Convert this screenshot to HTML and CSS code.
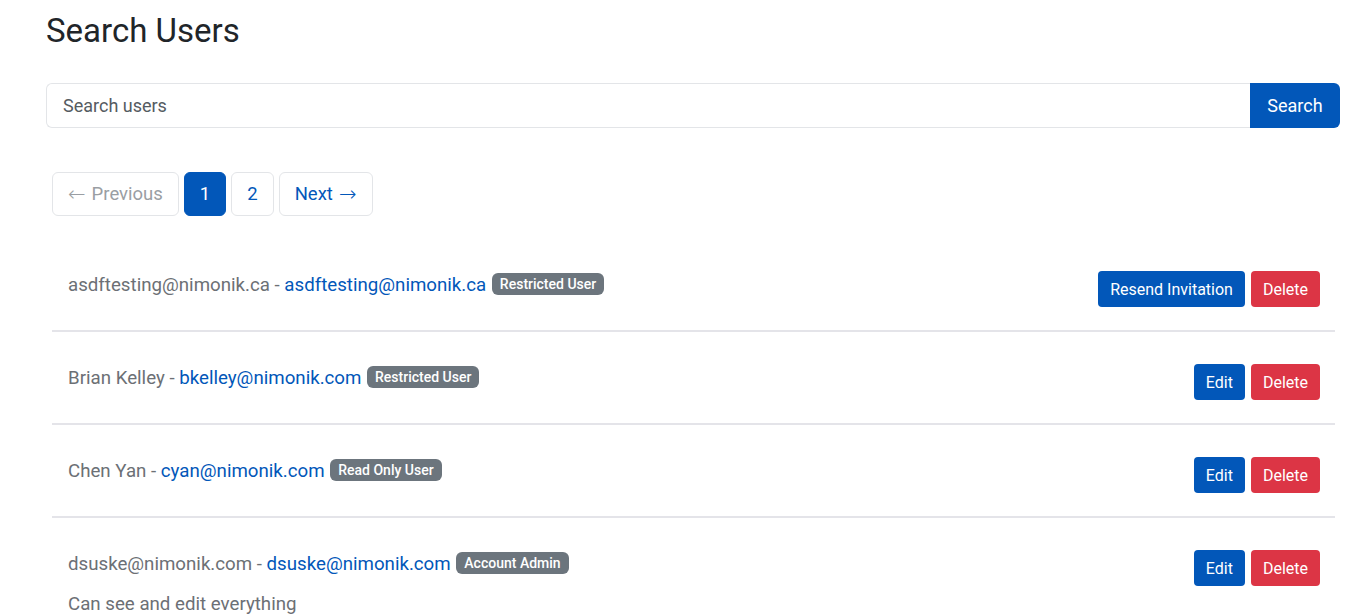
FILE: index.html
```html
<!DOCTYPE html>
<html lang="en">
<head>
  <meta charset="UTF-8" />
  <title>Search Users</title>
  <link rel="stylesheet" href="styles.css">
</head>
<body>
  <div class="page">
    <h1 class="page-title">Search Users</h1>

    <form class="search-bar" onsubmit="return false">
      <input class="search-input" type="text" placeholder="Search users" />
      <button class="search-btn" type="submit">Search</button>
    </form>

    <div class="pagination">
      <span class="page-link disabled"><span class="arrow">&larr;</span> Previous</span>
      <span class="page-link active">1</span>
      <a class="page-link" href="#">2</a>
      <a class="page-link" href="#">Next <span class="arrow">&rarr;</span></a>
    </div>

    <div class="user-list">
      <div class="user-row">
        <div class="user-info">
          <div class="user-line">asdftesting@nimonik.ca - <a href="#">asdftesting@nimonik.ca</a> <span class="badge">Restricted User</span></div>
        </div>
        <div class="user-actions">
          <button class="btn btn-primary">Resend Invitation</button>
          <button class="btn btn-danger">Delete</button>
        </div>
      </div>
      <div class="user-row">
        <div class="user-info">
          <div class="user-line">Brian Kelley - <a href="#">bkelley@nimonik.com</a> <span class="badge">Restricted User</span></div>
        </div>
        <div class="user-actions">
          <button class="btn btn-primary">Edit</button>
          <button class="btn btn-danger">Delete</button>
        </div>
      </div>
      <div class="user-row">
        <div class="user-info">
          <div class="user-line">Chen Yan - <a href="#">cyan@nimonik.com</a> <span class="badge">Read Only User</span></div>
        </div>
        <div class="user-actions">
          <button class="btn btn-primary">Edit</button>
          <button class="btn btn-danger">Delete</button>
        </div>
      </div>
      <div class="user-row">
        <div class="user-info">
          <div class="user-line">dsuske@nimonik.com - <a href="#">dsuske@nimonik.com</a> <span class="badge">Account Admin</span></div>
          <div class="user-desc">Can see and edit everything</div>
        </div>
        <div class="user-actions">
          <button class="btn btn-primary">Edit</button>
          <button class="btn btn-danger">Delete</button>
        </div>
      </div>
    </div>
  </div>
</body>
</html>
```

FILE: styles.css
```css
* { margin: 0; padding: 0; box-sizing: border-box; }
body {
  font-family: Roboto, "Liberation Sans", sans-serif;
  background: #fff;
  color: #212529;
  overflow: hidden;
}
.page { padding: 12px 24px 0 46px; width: 1364px; }
.page-title { font-size: 33px; font-weight: 400; line-height: 38px; color: #212529; }

.search-bar { display: flex; width: 1294px; margin-top: 33px; }
.search-input { flex: 1; height: 45px; border: 1px solid #e3e5e8; border-right: none;
  border-radius: 6px 0 0 6px; padding: 0 16px; font-size: 18px; font-family: inherit;
  color: #212529; outline: none;
}
.search-input::placeholder { color: #555b61; }
.search-btn { width: 90px; height: 45px; border: none; background: #0257b9; color: #fff;
  font-size: 18px; font-family: inherit; border-radius: 0 6px 6px 0; cursor: pointer;
}

.pagination { display: flex; gap: 5px; margin: 44px 0 0 6px; }
.page-link { display: flex; align-items: center; justify-content: center; gap: 6px; height: 44px;
  min-width: 42px; padding: 0 15px; border: 1px solid #e3e5e8; border-radius: 6px;
  font-size: 18.5px; color: #0257b9; text-decoration: none;
}
.page-link .arrow { font-family: "DejaVu Sans", sans-serif; font-size: 21px; font-weight: 200; line-height: 1; }
.page-link.disabled { color: #9a9ea3; }
.page-link.active { background: #0257b9; border-color: #0257b9; color: #fff; }

.user-list { width: 1283px; margin: 23px 0 0 6px; }
.user-row { display: flex; align-items: flex-start; justify-content: space-between;
  padding: 32px 15px 23px 16px; border-bottom: 2px solid #e4e4e9;
}
.user-row:last-child { border-bottom: none; }
.user-line { font-size: 18.7px; line-height: 28px; color: #6c7075; }
.user-line a { color: #0257b9; text-decoration: none; }
.user-desc { font-size: 18.7px; line-height: 28px; color: #6c7075; margin-top: 12px; }
.badge { display: inline-block; background: #6c757d; color: #fff; font-size: 14px;
  font-weight: 500; line-height: 22px; padding: 0 8px; border-radius: 6px;
  vertical-align: 2px; margin-left: 1px;
}
.user-actions { display: flex; gap: 6px; }
.btn { height: 36px; padding: 0 12px; border: none; border-radius: 4px; color: #fff;
  font-size: 16px; font-family: inherit; cursor: pointer;
}
.btn-primary { background: #0257b9; }
.btn-danger { background: #dc3545; }
```
